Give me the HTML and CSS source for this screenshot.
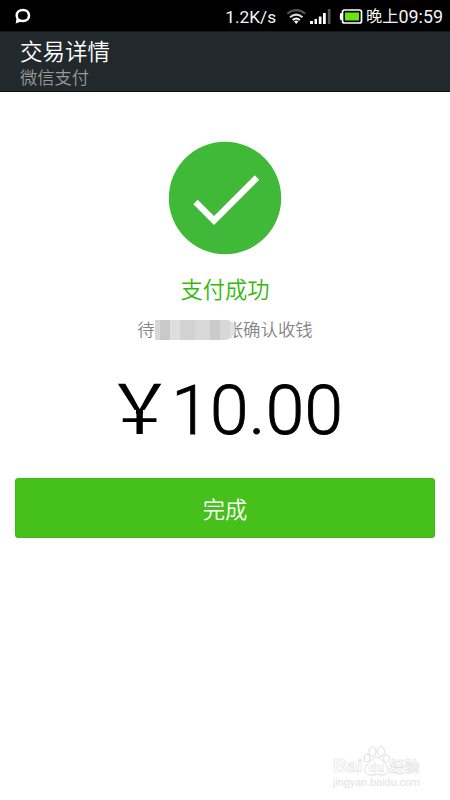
FILE: index.html
```html
<!DOCTYPE html>
<html lang="zh-CN">
<head>
<meta charset="utf-8">
<meta name="viewport" content="width=device-width, initial-scale=1">
<title>交易详情</title>
<link rel="stylesheet" href="styles.css">
</head>
<body>
<div class="statusbar">
  <svg class="chat" width="18" height="18" viewBox="0 0 18 18"><path d="M9 1.900c3.800 0 6 2.500 6 5.600s-2.200 5.600-6 5.600-6.300-2.500-6.300-5.600S5.200 1.900 9 1.900Z" fill="none" stroke="#fff" stroke-width="2.500"/><path d="M1.700 15.500l.8-5 4.800 3Z" fill="#fff"/></svg>
  <span class="speed">1.2K/s</span>
  <svg class="wifi" width="21" height="17" viewBox="0 0 21 17" fill="none" stroke-width="2"><path d="M1.300 5.800Q10.200-1.600 19.300 5.800" stroke="#555"/><path d="M4 9.200Q10.200 4 16.500 9.200" stroke="#ddd"/><path d="M6.700 12.100Q10.200 9 13.800 12.100" stroke="#fff"/><path d="M8 13.300Q10.200 11.500 12.500 13.300L10.200 16Z" fill="#fff"/></svg>
  <svg class="signal" width="21" height="15" viewBox="0 0 21 15" fill="#fff"><path d="M0 12h3v3H0zM4.500 10h2.500v5H4.500zM8.800 7.500h2.700v7.500H8.800zM13 4h2.800v11H13z"/><path d="M17.800 0h2.700v15h-2.700z" fill="#555"/></svg>
  <svg class="battery" width="24" height="15" viewBox="0 0 24 15"><path d="M3.500 4H1.300Q.3 7.500 1.300 11H3.500Z" fill="#fff"/><rect x="3.500" y="1" width="19" height="13" rx="2" fill="#000" stroke="#fff" stroke-width="1.700"/><rect x="6" y="3.500" width="14" height="8" fill="#68e414"/></svg>
  <span class="clock"><span class="period">晚上</span>09:59</span>
</div>
<header class="header">
  <h1 class="title">交易详情</h1>
  <p class="subtitle">微信支付</p>
</header>
<main class="content">
  <svg class="success" width="114" height="114" viewBox="0 0 114 114"><circle cx="57" cy="57" r="56.200" fill="#40b838"/><path d="M27.500 61L46 79.500 89 36.500" fill="none" stroke="#fff" stroke-width="6.200"/></svg>
  <p class="result">支付成功</p>
  <p class="payee"><span>待</span><span class="mask"><i></i><i></i><i></i><i></i><i></i><i></i><i></i><i></i></span><span class="tail">张</span><span>确认收钱</span></p>
  <p class="amount"><span class="yen">￥</span><span class="digits">10.00</span></p>
  <button class="done" type="button">完成</button>
</main>
<footer class="watermark">
  <div class="brand"><span class="bai">Bai</span><svg class="paw" width="27" height="30" viewBox="0 0 27 30" fill="#fff" stroke="#dedede"><ellipse cx="4" cy="12" rx="3" ry="4"/><ellipse cx="9.500" cy="5.500" rx="3.500" ry="4.800"/><ellipse cx="18" cy="5.500" rx="3.500" ry="4.800"/><ellipse cx="23.500" cy="12.500" rx="3" ry="4"/><path d="M13.500 11C18 11 19 16 23 19C28 24 24 30 19 29Q13.500 28 8 29C3 30-1 24 4 19C8 16 9 11 13.500 11Z"/><text x="13.500" y="26" class="du" text-anchor="middle">du</text></svg><span class="jy">经验</span></div>
  <div class="site">jingyan.baidu.com</div>
</footer>
</body>
</html>
```
FILE: styles.css
```css
* { box-sizing: border-box; }
body {
  margin: 0;
  width: 450px;
  height: 800px;
  display: flex;
  flex-direction: column;
  overflow: hidden;
  background: #fff;
  font-family: "Liberation Sans", "Noto Sans CJK SC", sans-serif;
}
h1, p { margin: 0; font-weight: 350; }
.statusbar {
  height: 31px;
  flex: none;
  display: flex;
  align-items: center;
  padding: 2px 7px 0 14px;
  background: #000;
  color: #f4f4f4;
  font-family: Roboto, "Noto Sans CJK SC", sans-serif;
  line-height: 28px;
  white-space: nowrap;
}
.chat { margin-top: 1px; }
.speed { margin-left: auto; font-size: 17.3px; }
.wifi { margin-left: 10px; }
.signal { margin-left: 3px; }
.battery { margin: 0 3px 0 8px; }
.clock { font-size: 17.900px; display: flex; }
.period { font-size: 16.200px; }
.header {
  height: 61px;
  flex: none;
  padding: 7px 20px 0;
  background: #22292c;
  border-top: 1px solid #14191b;
  border-bottom: 1px solid #101415;
}
.title { color: #fff; font-size: 22.5px; line-height: 27px; }
.subtitle { color: #999; font-size: 17.3px; line-height: 25px; }
.content {
  display: flex;
  flex-direction: column;
  align-items: center;
  padding: 49px 15px 0;
}
.success { display: block; }
.result { margin-top: 20px; color: #35b80b; font-size: 22.300px; line-height: 32px; }
.payee {
  display: flex;
  margin-top: 11px;
  height: 24px;
  color: #858585;
  font-size: 17.400px;
  line-height: 24px;
}
.tail { margin-left: -9px; }
.mask {
  position: relative;
  z-index: 1;
  width: 80px;
  height: 20px;
  margin-top: 2px;
  display: grid;
  grid-template-columns: 5px 10px 10px 15px 15px 10px 10px 5px;
  border-radius: 0 8px 10px 0;
  overflow: hidden;
}
.mask i { background: #d8d8d8; }
.mask i:nth-child(2) { background: #c9c9c9; }
.mask i:nth-child(3) { background: #dedede; }
.mask i:nth-child(4) { background: #d2d2d2; }
.mask i:nth-child(6) { background: #cbcbcb; }
.mask i:nth-child(8) { background: #e1e1e1; }
.amount {
  display: flex;
  width: 240px;
  margin-top: 28px;
  height: 80px;
  color: #000;
  font-size: 69.300px;
  line-height: 80px;
}
.yen { position: relative; font-weight: 400; }
.yen::before, .yen::after {
  content: "";
  position: absolute;
  top: 40px;
  width: 15px;
  height: 6px;
  background: #fff;
}
.yen::before { left: 16px; }
.yen::after { left: 38px; }
.digits {
  margin: 1px 0 0 -3px;
  font-family: Roboto, sans-serif;
  font-weight: 300;
  letter-spacing: .3px;
  -webkit-text-stroke: .9px #000;
}
.done {
  width: 420px;
  height: 60px;
  margin-top: 28px;
  border: 1px solid #3dba14;
  border-radius: 3px;
  background: #46c01b;
  color: #fff;
  font: 350 22.300px "Noto Sans CJK SC", sans-serif;
}
.watermark {
  margin: auto 0 11px 333px;
  color: #fff;
  -webkit-text-stroke: .6px #dedede;
  font-weight: 700;
  white-space: nowrap;
}
.brand { display: flex; align-items: flex-end; height: 31px; }
.bai { font-size: 19px; line-height: 20px; }
.paw { margin-left: 0; }
.du { font-size: 13px; stroke: #dedede; stroke-width: .5px; -webkit-text-stroke: 0; }
.jy { font-size: 15px; line-height: 18px; margin-left: 0; }
.site { font-size: 10.800px; line-height: 13px; font-weight: 400; color: #e2e2e2; -webkit-text-stroke: 0; }
```
